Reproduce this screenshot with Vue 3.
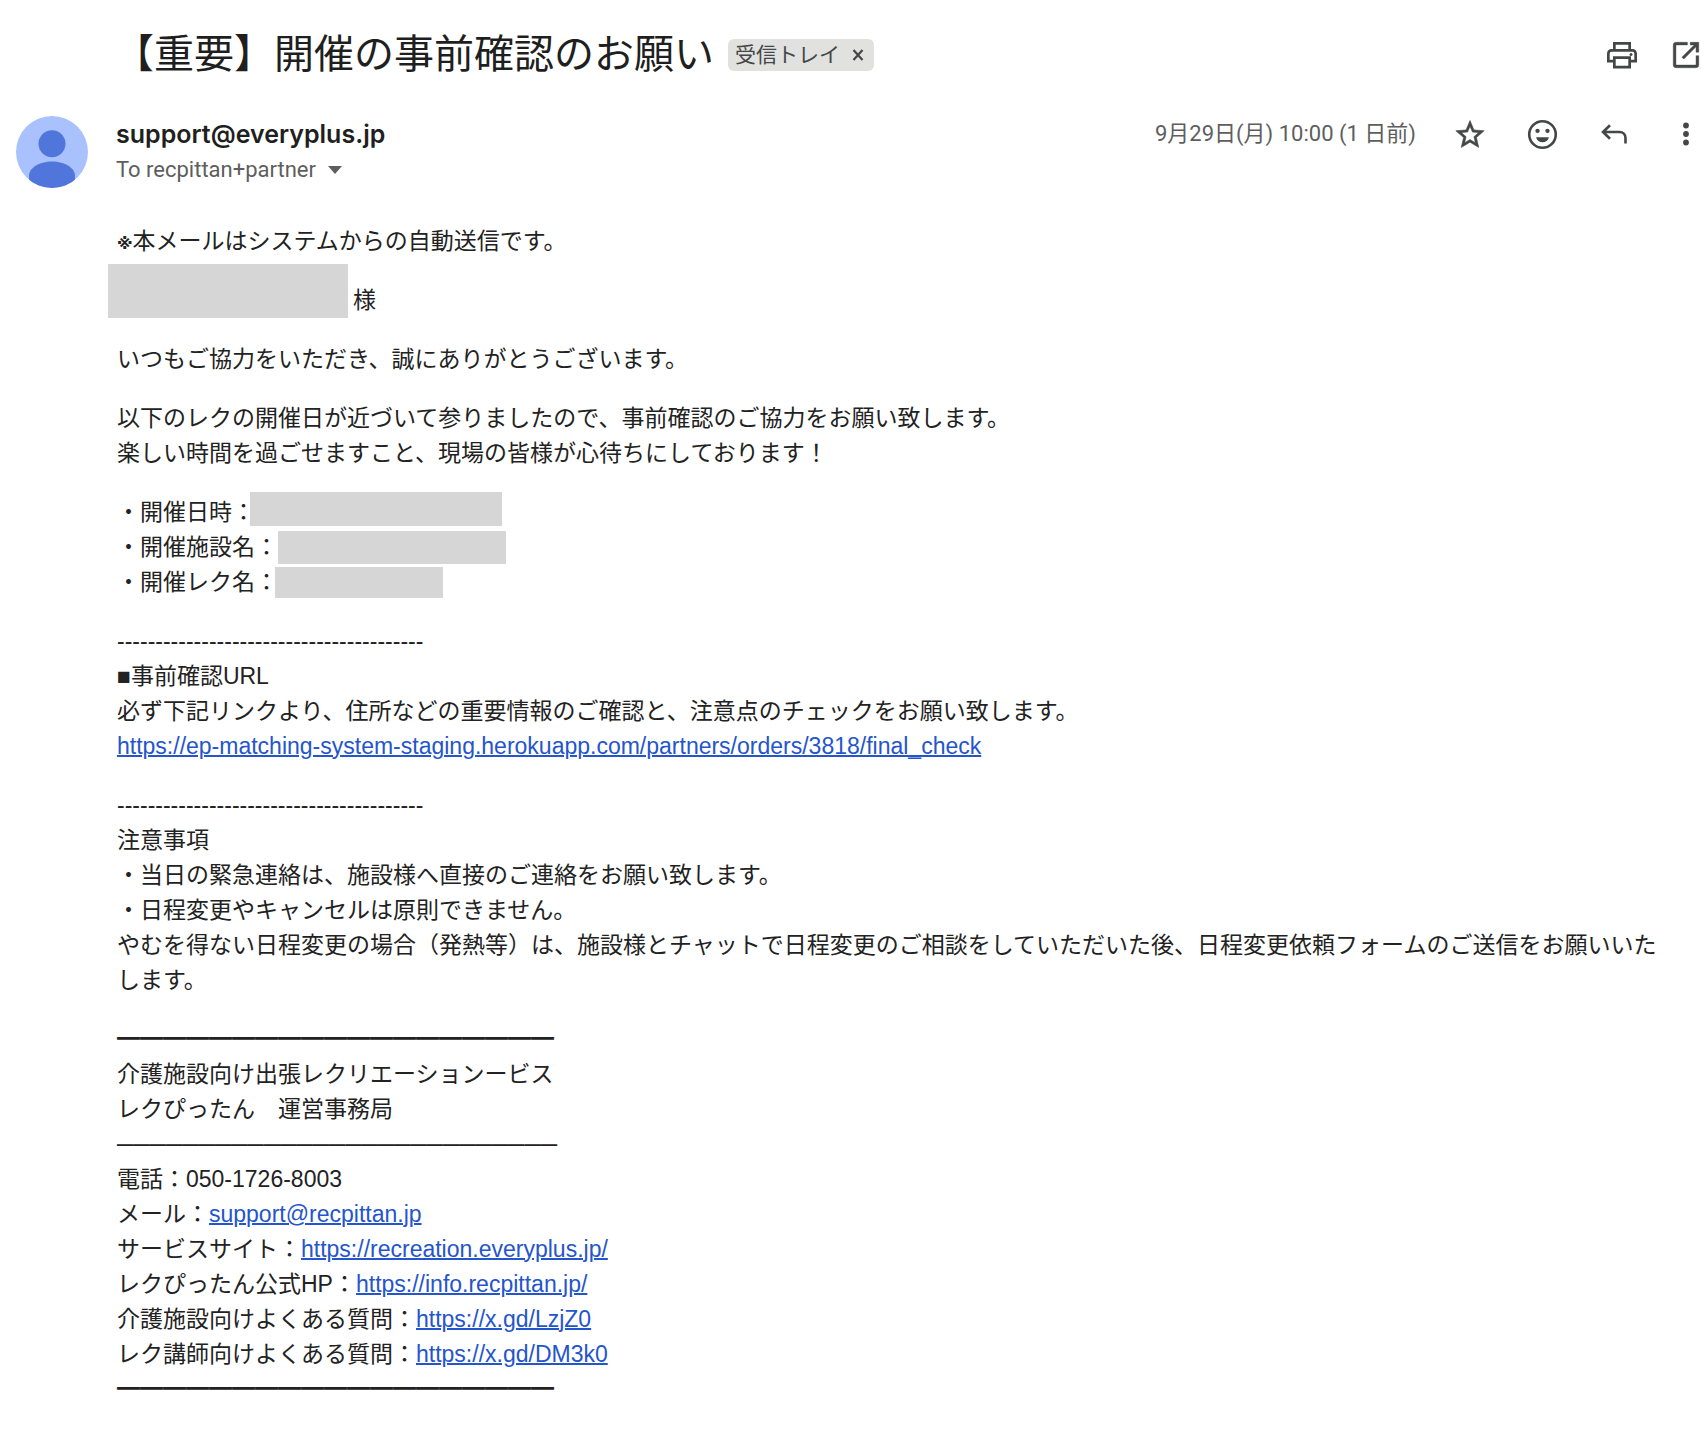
<script setup>
const heavyRule = '━'.repeat(19)
const lightRule = '─'.repeat(27)
const dashes = '-'.repeat(40)

const details = [
  { label: '・開催日時：', mask: 'mask-date' },
  { label: '・開催施設名：', mask: 'mask-place' },
  { label: '・開催レク名：', mask: 'mask-event' },
]

const contacts = [
  { label: 'メール：', text: 'support@recpittan.jp', href: 'mailto:support@recpittan.jp' },
  { label: 'サービスサイト：', text: 'https://recreation.everyplus.jp/', href: 'https://recreation.everyplus.jp/' },
  { label: 'レクぴったん公式HP：', text: 'https://info.recpittan.jp/', href: 'https://info.recpittan.jp/' },
  { label: '介護施設向けよくある質問：', text: 'https://x.gd/LzjZ0', href: 'https://x.gd/LzjZ0' },
  { label: 'レク講師向けよくある質問：', text: 'https://x.gd/DM3k0', href: 'https://x.gd/DM3k0' },
]
</script>

<template>
  <main class="mail" lang="ja">
    <header class="subject-row">
      <h1 class="subject">【重要】開催の事前確認のお願い</h1>
      <span class="chip">
        受信トレイ
        <button class="chip-close" type="button" aria-label="ラベルを削除">
          <svg viewBox="0 0 12 12" width="12" height="12"><path d="M1.5 1l9 10M10.5 1l-9 10" stroke="currentColor" stroke-width="2.2" /></svg>
        </button>
      </span>
      <div class="actions">
        <button class="icon" type="button" aria-label="印刷">
          <svg viewBox="0 0 24 24" width="36" height="36" fill="currentColor"><path d="M18 8V3.3H6V8H5a3 3 0 0 0-3 3v6h4v4h12v-4h4v-6a3 3 0 0 0-3-3h-1zM7.8 5.1h8.4V8H7.8V5.100zM16.200 19.200H7.800v-4.600h8.400v4.600zM18 15.200v-2.400H6v2.400H3.800V11A1.200 1.200 0 0 1 5 9.800h14a1.200 1.200 0 0 1 1.200 1.200v4.200H18z" /><circle cx="18" cy="11.600" r="1" /></svg>
        </button>
        <button class="icon" type="button" aria-label="新しいウィンドウで開く">
          <svg viewBox="0 0 24 24" width="34" height="34" fill="currentColor"><path d="M19.100 19.100H4.900V4.900H13V3H4.900A1.900 1.900 0 0 0 3 4.900v14.200A1.900 1.900 0 0 0 4.900 21h14.200a1.900 1.900 0 0 0 1.900-1.900V12.500h-1.900v6.600zM15 3v1.900h2.760L9.100 13.560l1.340 1.340L19.100 6.240V10H21V3h-6z" stroke="currentColor" stroke-width=".3" /></svg>
        </button>
      </div>
    </header>

    <section class="sender-row">
      <svg class="avatar" viewBox="0 0 72 72" width="72" height="72" role="img" aria-label="プロフィール画像">
        <defs><clipPath id="avatar-clip"><circle cx="36" cy="36" r="36" /></clipPath></defs>
        <g clip-path="url(#avatar-clip)">
          <rect width="72" height="72" fill="#a9c2fd" />
          <circle cx="36" cy="27.700" r="13.500" fill="#5075db" />
          <path d="M13 72V60c0-8 10-14.500 23-14.500S59 52 59 60v12z" fill="#5075db" />
        </g>
      </svg>
      <div class="sender">
        <div class="from">support@everyplus.jp</div>
        <button class="to" type="button">
          To recpittan+partner
          <svg viewBox="0 0 14 8" width="14" height="8"><path d="M0 0h14L7 8z" fill="currentColor" /></svg>
        </button>
      </div>
      <time class="date" datetime="2025-09-29T10:00">9月29日(月) 10:00 (1 日前)</time>
      <div class="actions message-actions">
        <button class="icon" type="button" aria-label="スターを付ける">
          <svg viewBox="0 0 24 24" width="34" height="34" fill="currentColor"><path d="M22 9.740l-7.190-.620L12 2.500 9.190 9.130 2 9.740l5.460 4.730L5.820 21.500 12 17.770l6.180 3.730-1.630-7.030L22 9.740zM12 15.900l-3.760 2.270 1-4.280-3.320-2.880 4.380-.380L12 6.600l1.710 4.040 4.380.380-3.320 2.880 1 4.280L12 15.900z" stroke="currentColor" stroke-width=".4" /></svg>
        </button>
        <button class="icon" type="button" aria-label="リアクションを追加">
          <svg viewBox="0 0 24 24" width="35" height="35" fill="currentColor"><path d="M12 2a10 10 0 1 0 0 20 10 10 0 0 0 0-20zm0 18.200a8.200 8.200 0 1 1 0-16.400 8.200 8.200 0 0 1 0 16.400z" /><circle cx="8.600" cy="9.500" r="1.500" /><circle cx="15.400" cy="9.500" r="1.500" /><path d="M7.600 13.800h8.800c-.5 2.200-2.300 3.500-4.400 3.500s-3.900-1.300-4.400-3.500z" /></svg>
        </button>
        <button class="icon" type="button" aria-label="返信">
          <svg viewBox="0 0 26 20" width="26" height="20" fill="none" stroke="currentColor" stroke-width="2.600"><path d="M9 1.200L2 8l7 6.800M2 8h16.500c3.500 0 6 2.500 6 6v5.500" /></svg>
        </button>
        <button class="icon" type="button" aria-label="その他">
          <svg viewBox="0 0 6 24" width="6" height="24" fill="currentColor"><circle cx="3" cy="3.500" r="2.900" /><circle cx="3" cy="12" r="2.900" /><circle cx="3" cy="20.500" r="2.900" /></svg>
        </button>
      </div>
    </section>

    <article class="body">
      <p><span class="note-mark">※</span>本メールはシステムからの自動送信です。</p>
      <p class="line addressee"><span class="mask mask-name"></span>様</p>
      <p>いつもご協力をいただき、誠にありがとうございます。</p>
      <p>以下のレクの開催日が近づいて参りましたので、事前確認のご協力をお願い致します。<br />楽しい時間を過ごせますこと、現場の皆様が心待ちにしております！</p>
      <div class="group">
        <div v-for="d in details" :key="d.label" class="line">{{ d.label }}<span class="mask" :class="d.mask"></span></div>
      </div>
      <p>
        {{ dashes }}<br />■事前確認URL<br />必ず下記リンクより、住所などの重要情報のご確認と、注意点のチェックをお願い致します。<br />
        <a href="https://ep-matching-system-staging.herokuapp.com/partners/orders/3818/final_check">https://ep-matching-system-staging.herokuapp.com/partners/orders/3818/final_check</a>
      </p>
      <p>
        {{ dashes }}<br />注意事項<br />・当日の緊急連絡は、施設様へ直接のご連絡をお願い致します。<br />・日程変更やキャンセルは原則できません。<br />やむを得ない日程変更の場合（発熱等）は、施設様とチャットで日程変更のご相談をしていただいた後、日程変更依頼フォームのご送信をお願いいたします。
      </p>
      <div class="group">
        <div>{{ heavyRule }}</div>
        <div>介護施設向け出張レクリエーションービス</div>
        <div>レクぴったん　運営事務局</div>
        <div>{{ lightRule }}</div>
        <div>電話：050-1726-8003</div>
        <div v-for="c in contacts" :key="c.href">{{ c.label }}<a :href="c.href">{{ c.text }}</a></div>
        <div>{{ heavyRule }}</div>
      </div>
    </article>
  </main>
</template>

<style>
body {
  margin: 0;
  background: #fff;
}
</style>

<style scoped>
.mail {
  padding: 23px 0 48px;
  color: #222;
  font-family: "Liberation Sans", "Noto Sans CJK JP", sans-serif;
}

button {
  padding: 0;
  border: 0;
  background: none;
  font: inherit;
  color: inherit;
}

svg {
  display: block;
}

.subject-row {
  display: flex;
  align-items: center;
  height: 64px;
  padding: 0 4px 0 114px;
}

.subject {
  align-self: flex-start;
  margin: 0;
  font: 400 40px/56px "Noto Sans CJK JP", sans-serif;
  color: #1f1f1f;
}

.chip {
  display: flex;
  align-items: flex-start;
  gap: 12px;
  height: 32px;
  margin-left: 14px;
  padding: 0 10px 0 7px;
  border-radius: 6px;
  background: #e1e1e0;
  font: 400 21px/28px "Noto Sans CJK JP", sans-serif;
  color: #444746;
}

.chip-close {
  align-self: center;
}

.actions {
  display: flex;
  gap: 28px;
  margin-left: auto;
  color: #444746;
}

.icon {
  display: flex;
  align-items: center;
  justify-content: center;
  width: 36px;
  height: 36px;
}

.sender-row {
  display: flex;
  align-items: flex-start;
  padding: 29px 4px 0 16px;
}

.sender {
  margin-left: 28px;
}

.from {
  font: 600 25px/36px Inter, sans-serif;
  color: #1f1f1f;
}

.to {
  display: flex;
  align-items: center;
  gap: 12px;
  font: 400 22px/36px Roboto, sans-serif;
  color: #5e5e5e;
}

.date {
  margin-left: auto;
  font: 400 22px/36px Roboto, "Noto Sans CJK JP", sans-serif;
  color: #5e5e5e;
}

.message-actions {
  gap: 36px;
  margin-left: 36px;
}

.body {
  padding: 36px 32px 0 117px;
  font-size: 23px;
  line-height: 35px;
}

.body p,
.group {
  margin: 0 0 24px;
}

.note-mark {
  font: 700 16px/1 "DejaVu Sans", sans-serif;
}

.line {
  display: flex;
  align-items: center;
  height: 35px;
}

.mask {
  flex: none;
  background: #d6d6d6;
}

.body .addressee {
  align-items: flex-end;
}

.mask-name {
  width: 240px;
  height: 54px;
  margin: 0 5px 0 -9px;
}

.mask-date {
  width: 252px;
  height: 34px;
  margin: 0 0 8px -5px;
}

.mask-place {
  width: 228px;
  height: 33px;
}

.mask-event {
  width: 168px;
  height: 31px;
  margin-left: -3px;
}

a {
  color: #2455cc;
  text-decoration-thickness: 2px;
}
</style>
